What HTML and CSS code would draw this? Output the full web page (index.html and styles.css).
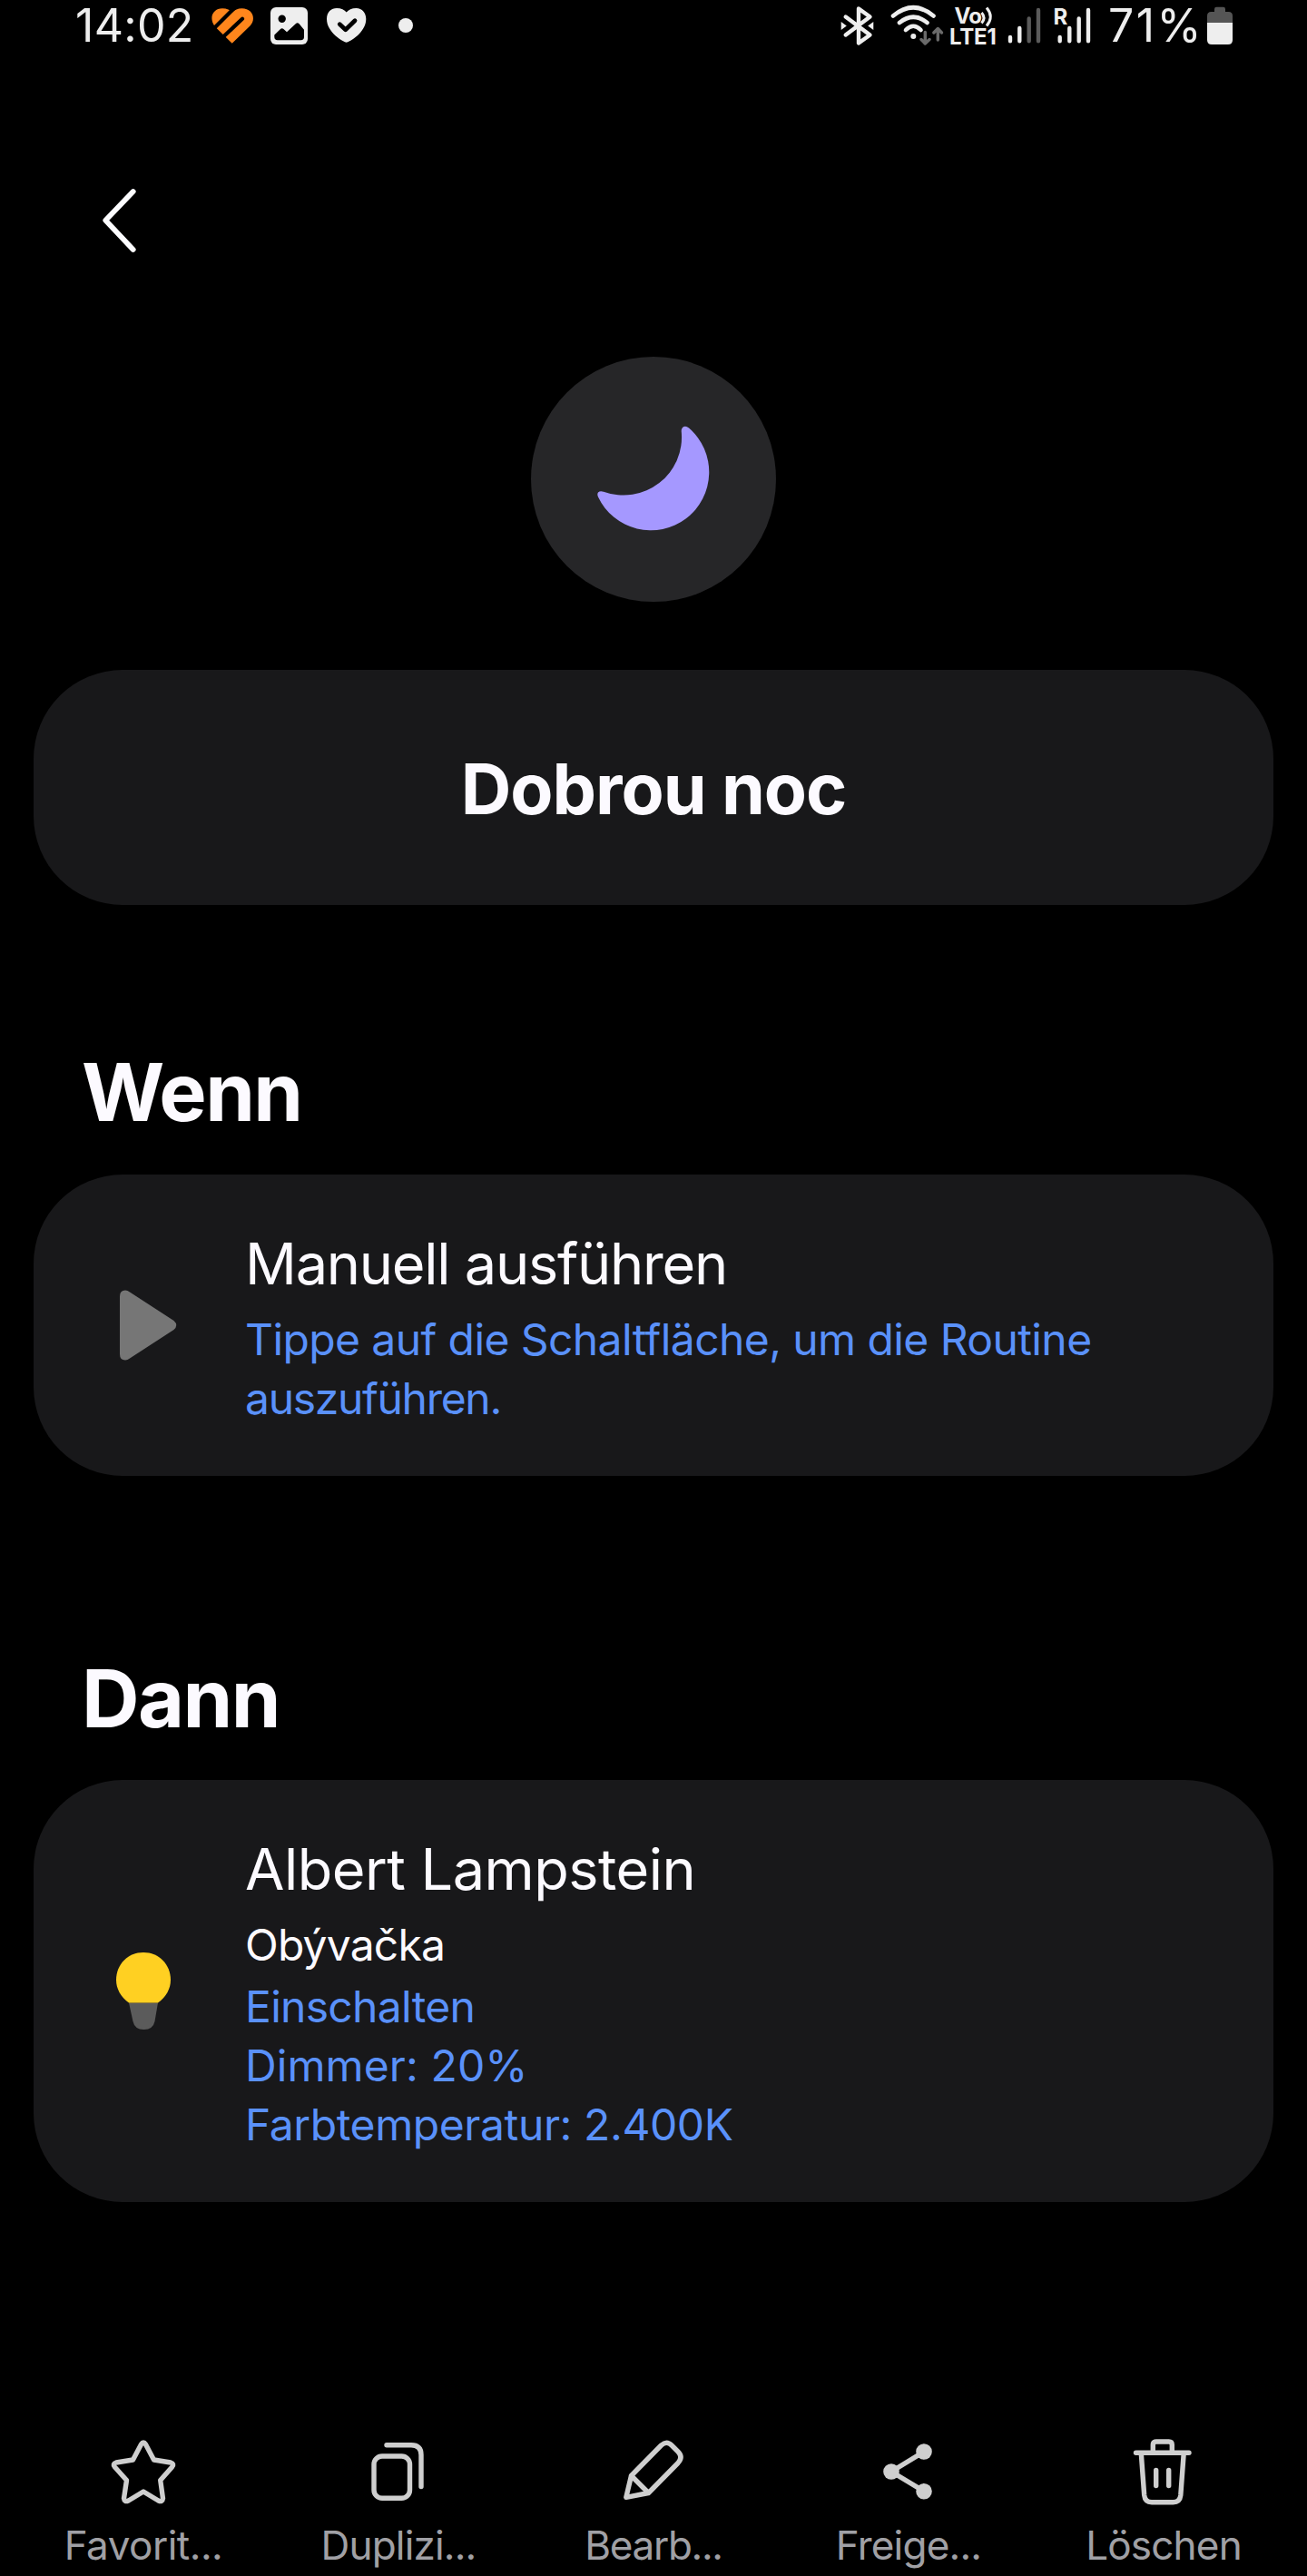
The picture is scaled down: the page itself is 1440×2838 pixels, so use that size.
FILE: index.html
```html
<!DOCTYPE html>
<html lang="de">
<head>
    <meta charset="UTF-8">
    <meta name="viewport" content="width=device-width, initial-scale=1.0">
    <title>Dobrou noc</title>
    <link rel="stylesheet" href="styles.css">
</head>
<body>
    <div class="status-bar">
        <div class="status-left">
            <span class="clock">14:02</span>
            <svg class="icon-fit" width="50" height="55" viewBox="0 0 50 55">
                <path fill="#ff861c" d="M24.7 47.7 L6 29.5 C-1.5 20 3.5 9.3 14 9.3 C19 9.3 22.5 11 25 13.5 C27.5 11 31 9.3 35.5 9.3 C47.5 9.3 51.5 21 44.5 28.5Z"/>
                <path stroke="#000" stroke-width="4.2" fill="none" d="M4.5 31.5 L27 9"/>
                <path stroke="#000" stroke-width="4.2" stroke-linecap="round" fill="none" d="M14 41.5 L36 20.7"/>
            </svg>
            <svg class="icon-photo" width="46" height="55" viewBox="0 0 46 55">
                <rect x="2" y="8" width="41" height="41" rx="6" fill="#eee"/>
                <circle cx="14.7" cy="20.7" r="4.2" fill="#000"/>
                <path d="M6.3 38.5 L13 32 Q14.7 30.6 16.4 32 L20 35.3 L30 26 Q31.7 24.6 33.4 26 L39 32.7 V40.5 Q39 44.3 35.5 44.3 H9.8 Q6.3 44.3 6.3 40.5Z" fill="#000"/>
            </svg>
            <svg class="icon-heart" width="48" height="55" viewBox="0 0 48 55">
                <path fill="#eee" d="M23.7 46.7 C21 46.7 2 36 2 21 C2 13 7 9 13 9 C18 9 21.5 11 23.7 13.5 C26 11 29.5 9 34.5 9 C41 9 45.3 14 45.3 21 C45.3 36 26.5 46.7 23.7 46.7Z"/>
                <path d="M16.3 26.7 L22.7 32.7 L33 22.7" fill="none" stroke="#000" stroke-width="4.8" stroke-linecap="round" stroke-linejoin="round"/>
            </svg>
            <span class="dot"></span>
        </div>
        <div class="status-right">
            <svg width="40" height="55" viewBox="0 0 40 55">
                <path d="M7.7 18.5 L34.5 38.5 L22 47.5 V9.5 L34.5 18.5 L7.7 38.5" fill="none" stroke="#eee" stroke-width="4.4" stroke-linecap="round" stroke-linejoin="round"/>
                <path d="M2.7 24 L8.8 28.5 L2.7 33Z M38.3 24 L32.2 28.5 L38.3 33Z" fill="#eee"/>
            </svg>
            <svg class="icon-wifi" width="62" height="55" viewBox="0 0 62 55">
                <g fill="none" stroke="#eee" stroke-width="4.6" stroke-linecap="round">
                    <path d="M4 17.5 Q26.3 -1 48.5 17.5"/>
                    <path d="M11 25 Q26.3 12.5 41.5 25"/>
                    <path d="M18 33 Q26.3 24.5 34.5 33"/>
                </g>
                <circle cx="26.3" cy="40" r="3" fill="#eee"/>
                <g fill="none" stroke="#6a6a6a" stroke-width="3.4" stroke-linecap="round" stroke-linejoin="round">
                    <path d="M39.3 35.5 V47.5 M35 43.5 L39.3 48 L44 43.5"/>
                    <path d="M53.3 44 V32 M48.8 36 L53.3 31.5 L57.5 36"/>
                </g>
            </svg>
            <svg class="icon-volte" width="54" height="55" viewBox="0 0 54 55">
                <text x="5.5" y="25.5" class="tiny">Vo</text>
                <text x="0" y="49" class="tiny" textLength="51">LTE1</text>
                <path d="M35.5 14 Q40.5 19.5 35.5 25.5 M41 8.5 Q49.5 18.5 41 28.5" fill="none" stroke="#eee" stroke-width="3"/>
            </svg>
            <svg class="icon-signal" width="42" height="55" viewBox="0 0 42 55">
                <g stroke-width="4.4" stroke-linecap="round">
                    <path d="M5 41 V45.3 M15.3 31 V45.3" stroke="#eee"/>
                    <path d="M25.7 20.5 V45.3 M36 11 V45.3" stroke="#5a5a5a"/>
                </g>
            </svg>
            <svg class="icon-roaming" width="44" height="55" viewBox="0 0 44 55">
                <text x="0.5" y="26.5" class="tiny">R</text>
                <path d="M7.7 41 V45.3 M18.3 31 V45.3 M28.7 20.5 V45.3 M39 11 V45.3" stroke="#eee" stroke-width="4.4" stroke-linecap="round"/>
            </svg>
            <span class="percent">71%</span>
            <svg width="32" height="55" viewBox="0 0 32 55">
                <path d="M2 25 V17.5 Q2 13 6.5 13 H10 V10 Q10 7.7 12.3 7.7 H19.7 Q22 7.7 22 10 V13 H25.5 Q30 13 30 17.5 V25Z" fill="#555"/>
                <path d="M2 25 H30 V44 Q30 49 25 49 H7 Q2 49 2 44Z" fill="#eee"/>
            </svg>
        </div>
    </div>

    <div class="header">
        <svg width="120" height="120" viewBox="0 0 120 120">
            <path d="M66.7 31 L36.3 62.7 L66.7 95" fill="none" stroke="#fcfcff" stroke-width="5.8" stroke-linecap="round" stroke-linejoin="round"/>
        </svg>
    </div>

    <div class="routine-icon">
        <svg width="270" height="270" viewBox="0 0 270 270">
            <path d="M165.7 82 A64 64 0 0 1 80 148.7 Q76 147.3 74 149.6 Q72.6 151.5 74 154.5 A64.2 64.2 0 1 0 174 78.5 Q171 76 168.5 77 Q165.7 78.3 165.7 82Z" fill="#a598ff"/>
        </svg>
    </div>

    <div class="card name-card">Dobrou noc</div>

    <h2>Wenn</h2>
    <div class="card">
        <div class="card-icon">
            <svg width="63" height="78" viewBox="0 0 63 78">
                <path d="M0 7 Q0 0.5 6 0.5 Q8.5 0.5 11 2.5 L59.5 34 Q65 39 59.5 44 L11 75.5 Q8.5 77.5 6 77.5 Q0 77.5 0 71Z" fill="#767676"/>
            </svg>
        </div>
        <div class="card-text">
            <div class="card-title manual">Manuell ausführen</div>
            <div class="value hint">Tippe auf die Schaltfläche, um die Routine <br><span class="tight">auszuführen.</span></div>
        </div>
    </div>

    <h2 class="section-dann">Dann</h2>
    <div class="card">
        <div class="card-icon">
            <svg class="bulb" width="60" height="85" viewBox="0 0 60 85">
                <path d="M14 55.5 H46 L42.5 76 Q40.5 85 30.5 85 Q20.5 85 18.5 76Z" fill="#5b5b5b"/>
                <path d="M14 55.5 C5 49 0 40 0 30.5 C0 13 13 0 30 0 C47 0 60 13 60 30.5 C60 40 55 49 46 55.5Z" fill="#ffd022"/>
            </svg>
        </div>
        <div class="card-text">
            <div class="card-title">Albert Lampstein</div>
            <div class="room">Obývačka</div>
            <div class="value">Einschalten</div>
            <div class="value dimmer">Dimmer: 20%</div>
            <div class="value color-temp">Farbtemperatur: 2.400K</div>
        </div>
    </div>

    <div class="toolbar">
        <div class="tool">
            <svg width="80" height="80" viewBox="0 0 80 80">
                <path d="M37.5 13 Q40 9 42.5 13 L51.5 30 L70 33 Q74.5 34.5 71.5 38 L58.7 52.5 L61.5 72.5 Q61 77 56.5 75 L40 65 L23.5 75 Q19 77 18.5 72.5 L21.5 52.5 L8.5 38 Q5.5 34.5 10 33 L28.5 30Z"/>
            </svg>
            <span class="favorite">Favorit...</span>
        </div>
        <div class="tool">
            <svg width="80" height="80" viewBox="0 0 80 80">
                <rect x="13" y="26" width="39.5" height="46.3" rx="9"/>
                <path d="M27 13.7 H54 Q65 13.7 65 24.5 V59.5"/>
            </svg>
            <span>Duplizi...</span>
        </div>
        <div class="tool">
            <svg width="80" height="80" viewBox="0 0 80 80">
                <path d="M9.8 71.3 L15.5 47.5 L48.5 14 Q54.5 8.5 60 14 L67 21 Q73 27 67 33.5 L34.5 66.5Z M15.5 47.5 L34.5 66.5"/>
            </svg>
            <span class="tight">Bearb...</span>
        </div>
        <div class="tool">
            <svg width="80" height="80" viewBox="0 0 80 80">
                <path d="M57 21 L21 43 L57 64.7"/>
                <g class="nodes">
                    <circle cx="57" cy="21" r="8.8"/>
                    <circle cx="21" cy="43" r="8.8"/>
                    <circle cx="57" cy="64.7" r="8.8"/>
                </g>
            </svg>
            <span>Freige...</span>
        </div>
        <div class="tool">
            <svg width="80" height="80" viewBox="0 0 80 80">
                <path d="M9.5 22.3 H68 M28.3 22 V13.5 Q28.3 10 31.8 10 H45.8 Q49.3 10 49.3 13.5 V22"/>
                <path d="M15.3 23 L18.7 69 Q19.5 76.7 27 76.7 H50.5 Q58 76.7 58.8 69 L62.2 23"/>
                <path d="M31.7 41.5 V58.5 M45.7 41.5 V58.5"/>
            </svg>
            <span>Löschen</span>
        </div>
    </div>
</body>
</html>
```
FILE: styles.css
```css
body {
    margin: 0;
    width: 1440px;
    height: 2838px;
    overflow: hidden;
    background: #000;
    color: #fcfaff;
    font-family: Inter, Roboto, sans-serif;
}
svg {
    display: block;
    flex-shrink: 0;
}

/* status bar */
.status-bar {
    display: flex;
    justify-content: space-between;
    height: 55px;
    padding: 0 80px 0 83px;
    color: #eee;
    font-size: 50px;
    line-height: 56px;
}
.status-left, .status-right {
    display: flex;
}
.clock {
    width: 148px;
    letter-spacing: 0.3px;
}
.icon-photo {
    margin-left: 15px;
}
.icon-heart {
    margin-left: 16px;
}
.dot {
    width: 16px;
    height: 16px;
    margin: 20px 0 0 33px;
    border-radius: 50%;
    background: #eee;
}
.icon-wifi {
    margin-left: 16px;
}
.icon-volte {
    margin-left: 4px;
}
.icon-signal {
    margin-left: 8px;
}
.icon-roaming {
    margin-left: 10px;
}
.tiny {
    fill: #eee;
    font-size: 24px;
    font-weight: 700;
    letter-spacing: -0.8px;
}
.percent {
    width: 107px;
    margin-left: 17px;
    letter-spacing: 2.4px;
}

.header {
    padding: 125px 0 0 80px;
}
.routine-icon {
    width: 270px;
    height: 270px;
    margin: 93px auto 75px;
    border-radius: 50%;
    background: #262628;
}

/* cards */
.card {
    display: flex;
    align-items: center;
    margin: 0 37px;
    border-radius: 98px;
    background: #18181a;
}
.name-card {
    justify-content: center;
    height: 256px;
    padding-top: 3px;
    font-size: 77px;
    font-weight: 650;
    letter-spacing: -1px;
}
h2 {
    margin: 156px 0 41px 90px;
    font-size: 88px;
    font-weight: 650;
    line-height: 100px;
    letter-spacing: -1.6px;
}
.section-dann {
    margin-top: 195px;
    margin-bottom: 40px;
}
.card-icon {
    width: 138px;
    padding-left: 95px;
}
.bulb {
    margin-left: -4px;
}
.card-text {
    padding: 61px 0 53px;
}
.card-title {
    margin-bottom: 13px;
    font-size: 63px;
    line-height: 75px;
    letter-spacing: -0.5px;
}
.manual {
    letter-spacing: -1.24px;
}
.room, .value {
    font-size: 48px;
    line-height: 65px;
    letter-spacing: -0.7px;
    white-space: nowrap;
}
.room {
    margin-bottom: 3px;
    letter-spacing: -0.8px;
}
.value {
    color: #5a91fa;
}
.value.hint {
    letter-spacing: -0.59px;
}
.value.dimmer {
    letter-spacing: 0.1px;
}
.value.color-temp {
    letter-spacing: -0.4px;
}
.tight {
    letter-spacing: -1.3px;
}

/* bottom actions */
.toolbar {
    display: grid;
    grid-template-columns: repeat(5, 281px);
    justify-content: center;
    margin-top: 254px;
}
.tool {
    display: flex;
    flex-direction: column;
    align-items: center;
    gap: 14px;
    color: #a0a0a5;
    font-size: 44px;
    line-height: 60px;
    letter-spacing: -0.8px;
}
.tool .favorite {
    letter-spacing: -0.5px;
}
.tool svg {
    fill: none;
    stroke: #cfcfcf;
    stroke-width: 5.4px;
    stroke-linecap: round;
    stroke-linejoin: round;
}
.tool .nodes {
    fill: #cfcfcf;
    stroke: none;
}
```
